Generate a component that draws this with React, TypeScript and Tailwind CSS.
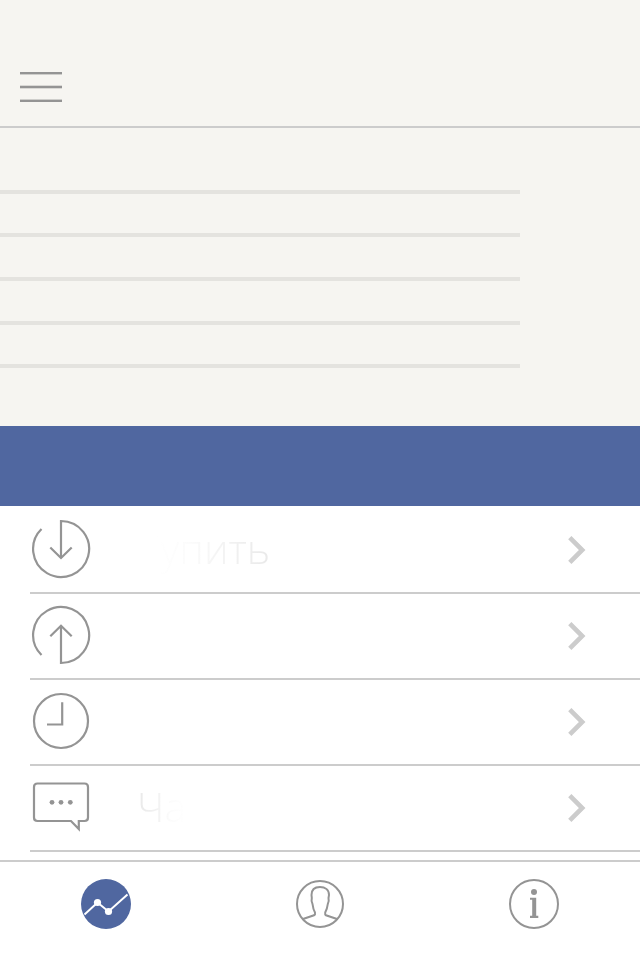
import type { ReactNode } from "react";

const gray = "#949494";

function Glyph({ children }: { children: ReactNode }) {
  return (
    <svg width="62" height="84" viewBox="0 0 62 84" fill="none" stroke={gray} strokeWidth="2.2">
      {children}
    </svg>
  );
}

function Chevron() {
  return (
    <svg className="ml-auto mr-[52px]" width="22" height="32" viewBox="0 0 22 32" fill="none">
      <path d="M3.8 3.7 L16.2 16 L3.8 28.3" stroke="#cccccc" strokeWidth="4.6" />
    </svg>
  );
}

const rows: { icon: ReactNode; label?: string; fade: string }[] = [
  {
    icon: (
      <>
        <path d="M11.5 21 A28 28 0 1 0 31 13 V50" />
        <path d="M20.3 39.5 L31 50 L41.7 39.5" />
      </>
    ),
    label: "Купить",
    fade: "bg-[linear-gradient(90deg,#fff_15%,#fbfbfb_40%,#f3f3f3_65%,#e9e9e9_100%)]",
  },
  {
    icon: (
      <>
        <path d="M11.5 61 A28 28 0 1 1 31 69 V32" />
        <path d="M20.3 42.3 L31 31.8 L41.7 42.3" />
      </>
    ),
    fade: "",
  },
  {
    icon: (
      <>
        <circle cx="31" cy="41" r="27" />
        <path d="M32.2 22.3 V44.5 H17" />
      </>
    ),
    fade: "",
  },
  {
    icon: (
      <>
        <path d="M7.5 17.5 H54.5 Q58 17.5 58 21 V51.5 Q58 55 54.5 55 H48.8 V63 L41 55 H7.5 Q4 55 4 51.5 V21 Q4 17.5 7.5 17.5 Z" />
        <g fill={gray} stroke="none">
          <circle cx="22" cy="36.3" r="2.4" />
          <circle cx="31" cy="36.3" r="2.4" />
          <circle cx="40.3" cy="36.3" r="2.4" />
        </g>
      </>
    ),
    label: "Ча",
    fade: "bg-[linear-gradient(90deg,#eaeaea_5%,#f4f4f4_50%,#fbfbfb_65%,#ffffff_100%)]",
  },
];

export default function App() {
  return (
    <div className="flex h-[960px] w-[640px] flex-col overflow-hidden bg-white font-['Open_Sans','Noto_Sans',sans-serif]">
      <header className="h-32 border-b-2 border-[#cccccc] bg-[#f6f5f1] pl-5 pt-[72px]">
        <svg width="42" height="30" viewBox="0 0 42 30" fill={gray}>
          <rect width="42" height="2.4" />
          <rect y="13.7" width="42" height="2.6" />
          <rect y="27.6" width="42" height="2.4" />
        </svg>
      </header>

      <section className="h-[298px] bg-[#f6f5f1] pt-[62px]">
        <div className="h-1 w-[520px] bg-[#e4e3df]" />
        <div className="mt-[39px] h-1 w-[520px] bg-[#e4e3df]" />
        <div className="mt-10 h-1 w-[520px] bg-[#e4e3df]" />
        <div className="mt-10 h-1 w-[520px] bg-[#e4e3df]" />
        <div className="mt-[39px] h-1 w-[520px] bg-[#e4e3df]" />
      </section>

      <div className="h-20 bg-[#5067a0]" />

      <ul className="h-[354px] pl-[30px] pt-0.5">
        {rows.map((row, i) => (
          <li key={i} className="flex h-[86px] items-center border-b-2 border-[#cccccc]">
            <Glyph>{row.icon}</Glyph>
            {row.label && (
              <span className={`mb-1 ml-[45px] bg-clip-text text-[41px] font-light leading-[56px] text-transparent ${row.fade}`}>
                {row.label}
              </span>
            )}
            <Chevron />
          </li>
        ))}
      </ul>

      <nav className="flex h-[100px] justify-between border-t-2 border-[#cccccc] pl-20 pr-20 pt-4">
        <svg width="52" height="52" viewBox="0 0 52 52">
          <circle cx="26" cy="26" r="25" fill="#5067a0" />
          <path d="M4.5 36.5 L17.5 24.5 L28.5 33.5 L47.5 16.5" fill="none" stroke="#fff" strokeWidth="2" />
          <circle cx="17.5" cy="24.5" r="3.6" fill="#fff" />
          <circle cx="28.5" cy="33.5" r="3.6" fill="#fff" />
        </svg>
        <svg width="52" height="52" viewBox="0 0 52 52" fill="none" stroke={gray} strokeWidth="2">
          <circle cx="26" cy="26" r="23" />
          <path d="M9 41 L20 37.3 Q21.5 36.5 21 34.5 C19.3 31.5 18.8 28.5 18.5 26 Q17 23.5 17.8 20 L17.5 17 C17.5 11.5 21 9 26 9 S35 11.5 35 17 L34.5 20 Q35.3 23.5 33.8 26 C33.5 28.5 32.8 31.5 31.2 34.5 Q30.8 36.5 32 37.3 L43 41" />
        </svg>
        <svg width="52" height="52" viewBox="0 0 52 52" fill="none">
          <circle cx="26" cy="26" r="24" stroke={gray} strokeWidth="2" />
          <circle cx="26" cy="14" r="3" fill={gray} />
          <path d="M22 19.7 H28.2 V37.8 H30.3 V40 H22 V37.8 H24.2 V21.8 H22 Z" fill={gray} />
        </svg>
      </nav>
    </div>
  );
}
